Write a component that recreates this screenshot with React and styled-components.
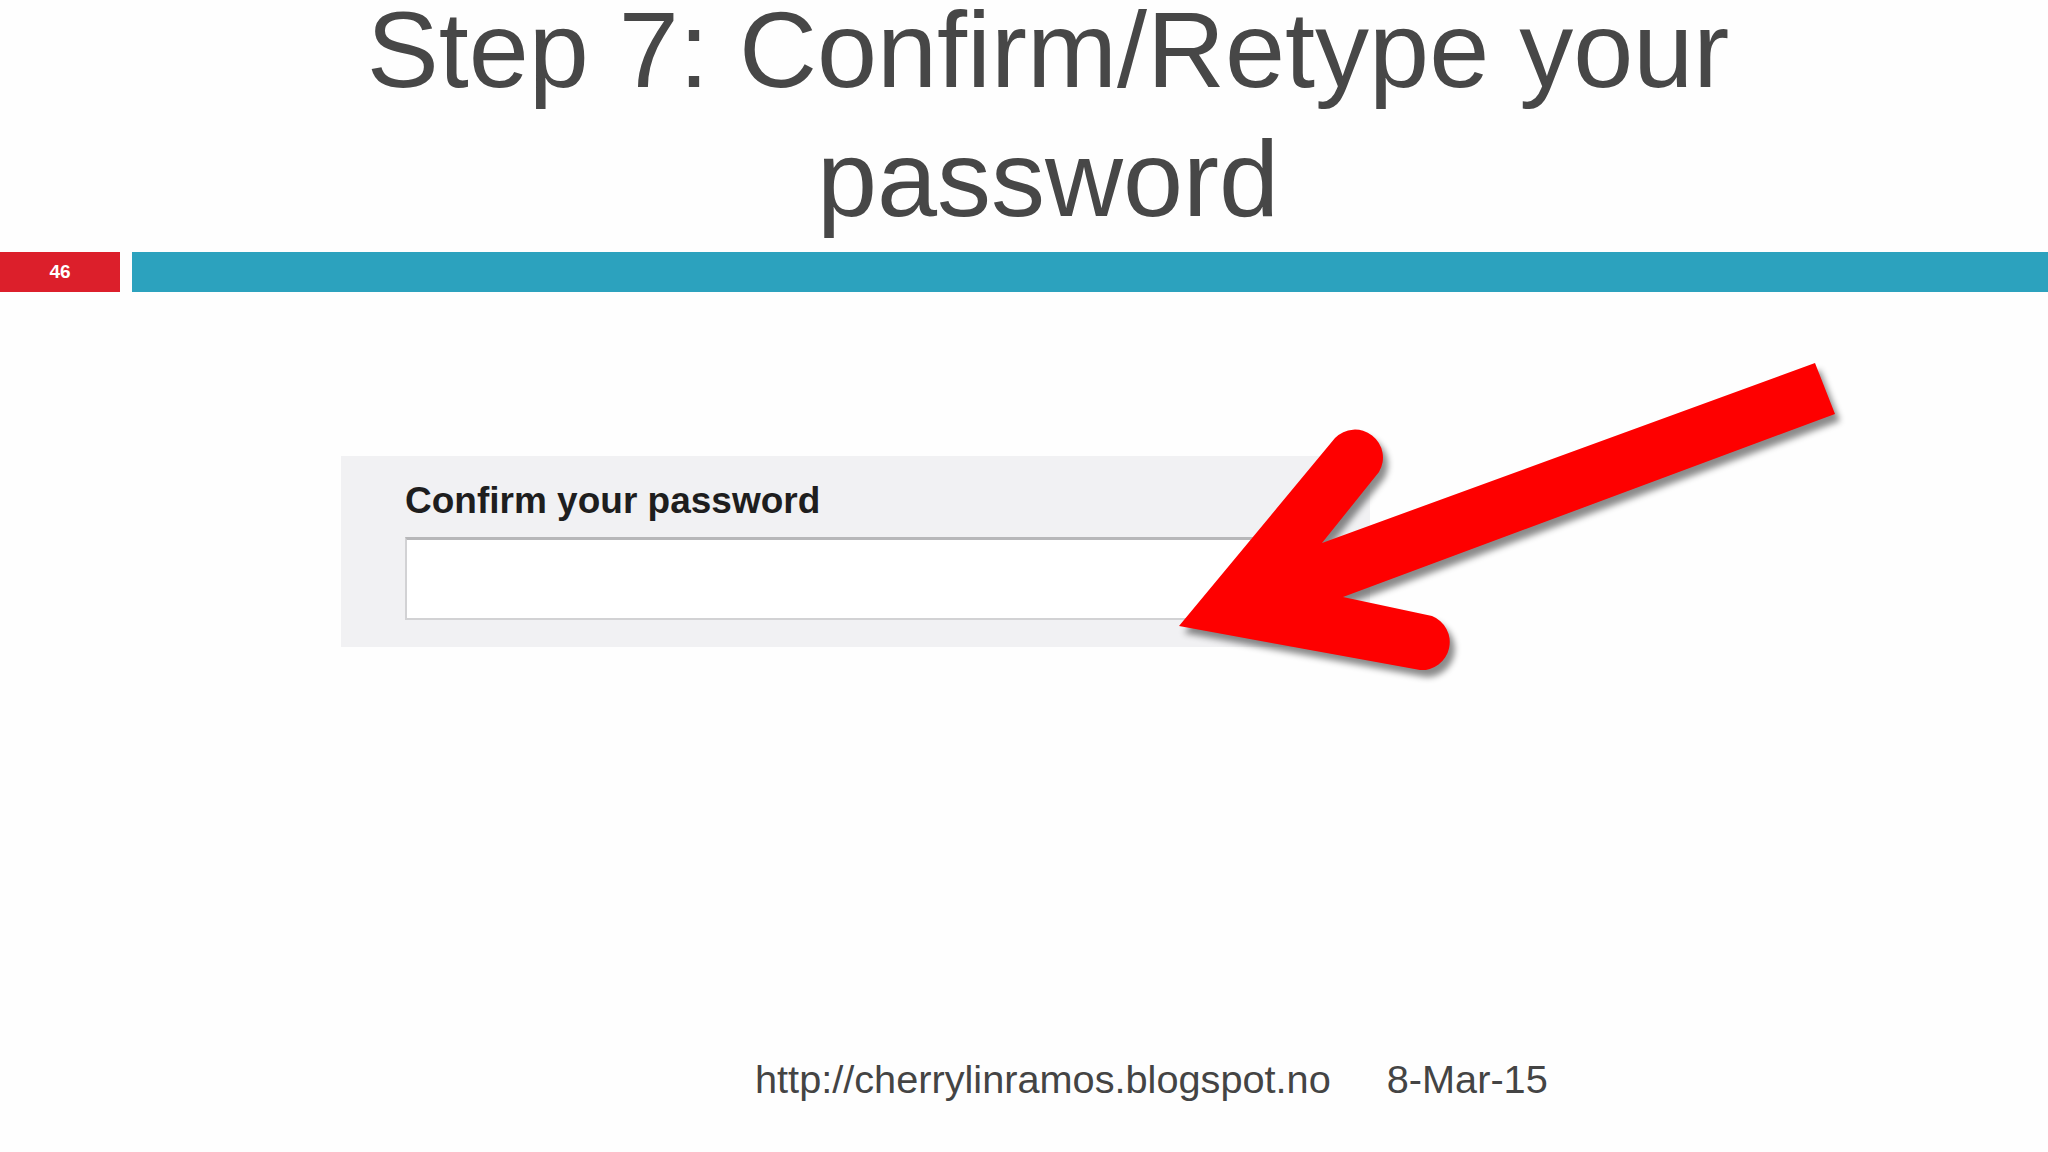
import React from 'react'
import styled, { createGlobalStyle } from 'styled-components'

const GlobalStyle = createGlobalStyle`
  html, body {
    margin: 0;
    padding: 0;
    background: #fefefe;
    overflow: hidden;
  }
  body {
    font-family: "Liberation Sans", Arial, sans-serif;
  }
`

export default function App() {
    return (
        <Slide>
            <GlobalStyle />
            <Title>
                <TitleLine>Step 7: Confirm/Retype your</TitleLine>
                <TitleLine>password</TitleLine>
            </Title>

            <Bar>
                <PageNumber>46</PageNumber>
                <Stripe />
            </Bar>

            <FormPanel>
                <Label htmlFor="confirm">Confirm your password</Label>
                <PasswordInput id="confirm" type="password" />
            </FormPanel>

            <Footer>
                <span>http://cherrylinramos.blogspot.no</span>
                <span>8-Mar-15</span>
            </Footer>

            <Arrow />
        </Slide>
    )
}

// the big red callout arrow, drawn over the form
const Arrow = () => (
    <ArrowLayer viewBox="0 0 2048 1152" width="2048" height="1152">
        <path
            d="M1179 626 L1335 438 A28 28 0 0 1 1379 472 L1322 543 L1815 363 L1835 414 L1343 597 L1432 616 A28 28 0 0 1 1420 670 Z"
            fill="#fe0000"
        />
    </ArrowLayer>
)

const Slide = styled.div`
position: relative;
width: 2048px;
height: 1152px;
display: flex;
flex-direction: column;
`

const Title = styled.h1`
margin: 0;
padding-left: 48px;
display: flex;
flex-direction: column;
align-items: center;
gap: 29px;
font-family: "Liberation Sans", Arial, sans-serif;
font-weight: 400;
font-size: 108px;
color: #474747;
`

const TitleLine = styled.span`
display: block;
line-height: 100px;
white-space: nowrap;
`

const Bar = styled.div`
margin-top: 23px;
display: flex;
gap: 12px;
height: 40px;
`

const PageNumber = styled.div`
width: 120px;
background: #dc1f2b;
color: #fff;
font-weight: 700;
font-size: 19px;
display: flex;
align-items: center;
justify-content: center;
`

const Stripe = styled.div`
flex: 1;
background: #2ca2be;
`

const FormPanel = styled.div`
margin: 164px 0 0 341px;
width: 1029px;
box-sizing: border-box;
padding: 23px 64px 27px;
background: #f1f1f3;
display: flex;
flex-direction: column;
gap: 14px;
`

const Label = styled.label`
font-family: "Liberation Sans", Arial, sans-serif;
font-weight: 700;
font-size: 37px;
line-height: 44px;
color: #1e1e1e;
`

const PasswordInput = styled.input`
height: 83px;
box-sizing: border-box;
margin: 0;
background: #fff;
border: 2px solid #d2d2d4;
border-top: 3px solid #b7b7b9;
outline: none;
`

const Footer = styled.div`
margin-top: 410px;
padding-left: 755px;
display: flex;
gap: 56px;
font-family: "Liberation Sans", Arial, sans-serif;
font-size: 39.7px;
line-height: 45px;
color: #444;
`

const ArrowLayer = styled.svg`
position: absolute;
top: 0;
left: 0;
pointer-events: none;
filter: drop-shadow(5px 7px 3px rgba(0, 0, 0, 0.45));
`
